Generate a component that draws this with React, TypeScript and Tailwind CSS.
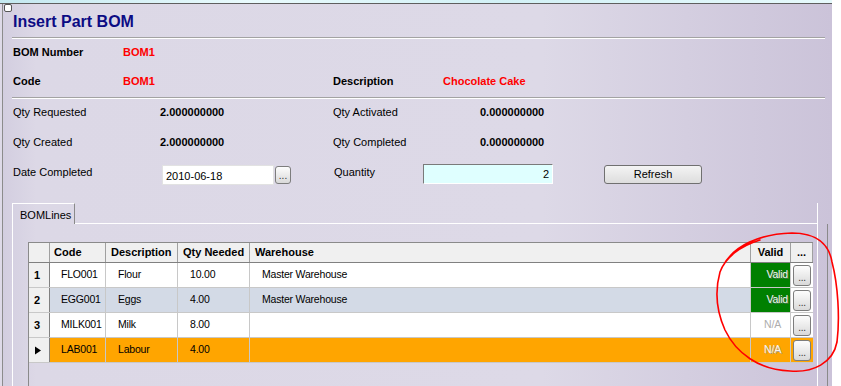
import React from "react";

const rows = [
  { n: "1", code: "FLO001", desc: "Flour", qty: "10.00", wh: "Master Warehouse", valid: true, bg: "bg-white" },
  { n: "2", code: "EGG001", desc: "Eggs", qty: "4.00", wh: "Master Warehouse", valid: true, bg: "bg-[#d3dae6]" },
  { n: "3", code: "MILK001", desc: "Milk", qty: "8.00", wh: "", valid: false, bg: "bg-white" },
  { n: "", code: "LAB001", desc: "Labour", qty: "4.00", wh: "", valid: false, bg: "bg-[#ffa500]", current: true },
];

function DotsButton({ className = "" }: { className?: string }) {
  return (
    <div
      className={
        "flex items-end justify-center rounded-[3px] border border-[#7d7d7d] bg-[linear-gradient(to_bottom,#fdfdfd,#d9d9d9)] text-[10px] leading-[10px] text-[#333] pb-[2px] " +
        className
      }
    >
      ...
    </div>
  );
}

export default function App() {
  return (
    <div
      className="relative w-[841px] h-[386px] overflow-hidden bg-white text-[11px] text-black"
      style={{ fontFamily: '"Liberation Sans", Arial, sans-serif' }}
    >
      <div className="flex flex-col w-[832px] h-full bg-[#dedae8]">
        {/* window top strip */}
        <div className="h-[3px] bg-[linear-gradient(to_right,#c4e8f0,#e9fbfd_30%,#d2f1f6_60%,#e6fafc)]" />
        <div className="h-px bg-[#5f5f5f]" />

        {/* panel */}
        <div className="relative flex-1 flex flex-col ml-[2px] border-l border-[#8c8c8c] bg-[linear-gradient(to_right,#d3cee0_0%,#dcd8e6_4%,#ddd9e7_65%,#cbc3d9_100%)]">
          <div className="absolute left-px top-0 w-[8px] h-[8px] rounded-[2px] border border-[#555] bg-white" />

          {/* title */}
          <div className="h-[33px] pl-[10px] pt-[8px]">
            <h1 className="text-[16px] leading-[20px] font-bold text-[#0c0c84]">Insert Part BOM</h1>
          </div>
          <div className="ml-[9px] w-[813px] h-[2px] border-t border-b border-t-[#a3a3a3] border-b-white" />

          {/* BOM number */}
          <div className="h-[26px] pl-[10px] flex items-center font-bold">
            <span className="w-[110px]">BOM Number</span>
            <span className="text-[#ff0000]">BOM1</span>
          </div>
          <div className="h-[32px] pl-[10px] flex items-center font-bold">
            <span className="w-[110px]">Code</span>
            <span className="w-[210px] text-[#ff0000]">BOM1</span>
            <span className="w-[110px]">Description</span>
            <span className="text-[#ff0000]">Chocolate Cake</span>
          </div>
          <div className="ml-[9px] w-[813px] h-[2px] border-t border-b border-t-[#a3a3a3] border-b-white" />

          {/* quantities */}
          <div className="h-[26px] pl-[10px] flex items-center">
            <span className="w-[147px]">Qty Requested</span>
            <span className="w-[173px] font-bold">2.000000000</span>
            <span className="w-[147px]">Qty Activated</span>
            <span className="font-bold">0.000000000</span>
          </div>
          <div className="h-[34px] pl-[10px] flex items-center">
            <span className="w-[147px]">Qty Created</span>
            <span className="w-[173px] font-bold">2.000000000</span>
            <span className="w-[147px]">Qty Completed</span>
            <span className="font-bold">0.000000000</span>
          </div>
          <div className="h-[28px] pl-[10px] flex items-start">
            <span className="w-[149px] mt-[7px] leading-[13px]">Date Completed</span>
            <div className="mt-[6px] w-[112px] h-[20px] bg-white border border-[#e2e2e2] flex items-center pl-[3px] pt-[2px]">
              2010-06-18
            </div>
            <DotsButton className="mt-[7px] ml-[1px] w-[16px] h-[18px]" />
            <span className="ml-[43px] w-[89px] mt-[7px] leading-[13px]">Quantity</span>
            <div className="mt-[5px] w-[130px] h-[20px] bg-[#dfffff] border border-t-[#7a7a7a] border-l-[#7a7a7a] border-r-white border-b-white flex items-center justify-end pr-[3px] pt-[1px]">
              2
            </div>
            <div className="mt-[6px] ml-[51px] w-[98px] h-[19px] rounded-[3px] border border-[#707070] bg-[linear-gradient(to_bottom,#f4f4f4,#dddddd)] flex items-center justify-center">
              Refresh
            </div>
          </div>

          {/* tabs */}
          <div className="mt-[16px] ml-[9px] flex h-[21px]">
            <div className="w-[63px] h-full border-t border-l border-r border-t-white border-l-white border-r-[#8a8a8a] flex items-center pl-[7px] pt-[2px]">
              BOMLines
            </div>
            <div className="w-[743px] h-full border-b border-r border-white" />
          </div>
          <div className="flex-1 ml-[9px] w-[816px] border-r border-[#8a8a8a] flex">
            <div className="w-[806px] border-l border-r border-white pl-[15px] pt-[18px] flex flex-col">
              <div className="flex-1 w-[785px] border-l border-t border-[#8a8a8a]">
                {/* header */}
                <div className="flex h-[20px] bg-[#f0f0f0] border-b border-[#808080] font-bold">
                  <div className="w-[21px] border-r border-[#a0a0a0]" />
                  <div className="w-[56px] border-r border-[#a0a0a0] pl-[4px] flex items-center">Code</div>
                  <div className="w-[72px] border-r border-[#a0a0a0] pl-[5px] flex items-center">Description</div>
                  <div className="w-[72px] border-r border-[#a0a0a0] pl-[5px] flex items-center">Qty Needed</div>
                  <div className="w-[501px] border-r border-[#a0a0a0] pl-[5px] flex items-center">Warehouse</div>
                  <div className="w-[40px] border-r border-[#a0a0a0] flex items-center justify-center">Valid</div>
                  <div className="w-[22px] border-r border-[#a0a0a0] flex items-center justify-center">...</div>
                </div>

                {rows.map((r, i) => (
                  <div key={i} className="flex h-[25px] border-b border-[#c8c8c8] text-[10.5px] tracking-[-0.2px]">
                    <div className="w-[21px] bg-[#f0f0f0] border-r border-[#808080] flex items-center pl-[5px] font-bold text-[11px] tracking-normal">
                      {r.current ? (
                        <svg width="8" height="9" viewBox="0 0 8 9">
                          <path d="M1 0.5 L7 4.5 L1 8.5 Z" fill="#000" />
                        </svg>
                      ) : (
                        r.n
                      )}
                    </div>
                    <div className={`w-[56px] border-r border-[#c8c8c8] pl-[11px] flex items-center ${r.bg}`}>{r.code}</div>
                    <div className={`w-[72px] border-r border-[#c8c8c8] pl-[12px] flex items-center ${r.bg}`}>{r.desc}</div>
                    <div className={`w-[72px] border-r border-[#c8c8c8] pl-[12px] flex items-center ${r.bg}`}>{r.qty}</div>
                    <div className={`w-[501px] border-r border-[#c8c8c8] pl-[12px] flex items-center ${r.bg}`}>{r.wh}</div>
                    {r.valid ? (
                      <div className="w-[40px] border-r border-[#c8c8c8] bg-[#008000] flex items-center justify-end pr-[2px] text-[#f0fff0] [text-shadow:0_0_1px_#2a5a2a,1px_1px_0_#4a7a4a]">
                        Valid
                      </div>
                    ) : r.current ? (
                      <div className="w-[40px] border-r border-[#c8c8c8] bg-[#ffa500] flex items-center justify-end pr-[9px] text-[#f4f4f4] [text-shadow:1px_1px_0_#b0a080]">
                        N/A
                      </div>
                    ) : (
                      <div className="w-[40px] border-r border-[#c8c8c8] bg-white flex items-center justify-end pr-[9px] text-[#adadad]">
                        N/A
                      </div>
                    )}
                    <div className={`w-[22px] flex items-center justify-center ${r.current ? "bg-[#ffa500]" : "bg-white"}`}>
                      <DotsButton className="w-[18px] h-[21px]" />
                    </div>
                  </div>
                ))}
              </div>
            </div>
          </div>
        </div>
      </div>

      {/* red annotation circle */}
      <svg className="absolute inset-0 pointer-events-none" width="841" height="386" viewBox="0 0 841 386">
        <path
          d="M723 266 C734 245 760 234 792 233 C816 233 829 244 832 262 C838 285 840 318 837 342 C833 363 813 373 790 371 C759 370 736 353 725 330 C716 310 715 290 720 272 C725 258 740 246 760 240"
          fill="none"
          stroke="#ff0000"
          strokeWidth="1.6"
          strokeLinecap="round"
        />
      </svg>
    </div>
  );
}
